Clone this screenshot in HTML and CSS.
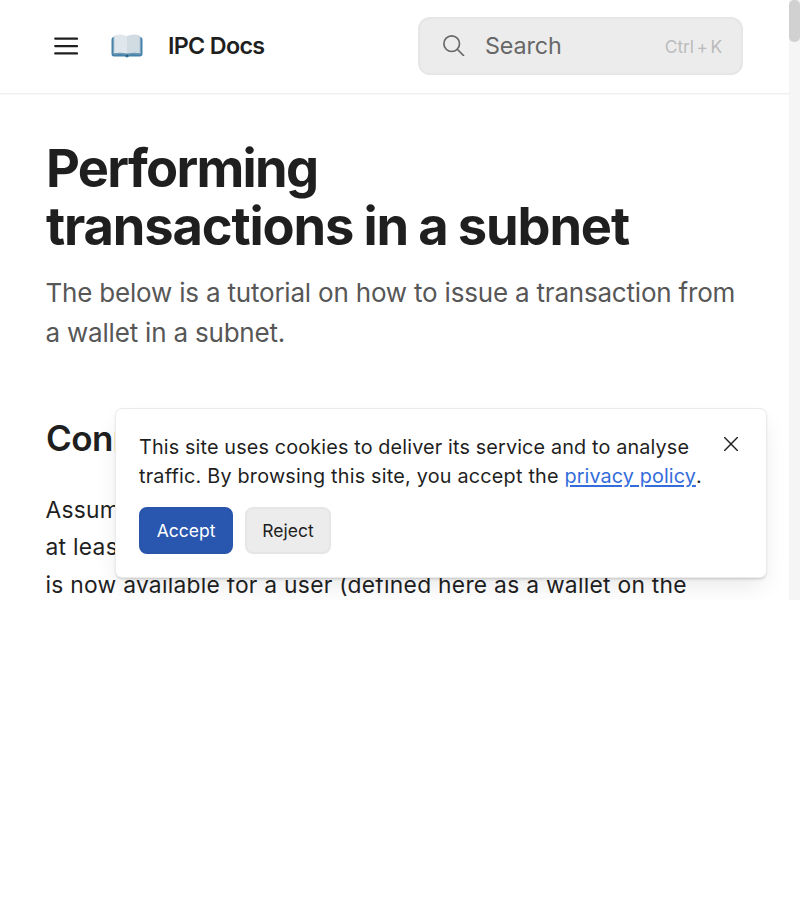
FILE: index.html
```
<!DOCTYPE html>
<html lang="en">
<head>
<meta charset="utf-8">
<title>IPC Docs</title>
<link rel="stylesheet" href="styles.css">
</head>
<body>
<div class="viewport">
  <div class="page">
    <header class="header">
      <svg class="menu" viewBox="0 0 24 20" aria-hidden="true"><path d="M1.2 2.6H23M1.2 10.100H23M1.2 17.400H23"/></svg>
      <svg class="book" viewBox="0 0 32 24" aria-hidden="true">
        <path d="M2.500 3H29.500Q31.500 3 31.500 5.500V19.500Q31.500 22.500 29 22.500H18Q16 24.500 14 22.500H3Q.5 22.500 .5 19.500V5.500Q.5 3 2.500 3Z" fill="#4682aa"/>
        <path d="M2.500 3 4 1.200V19L2.500 20ZM29.500 3 28 1.200V19L29.500 20Z" fill="#b2c6d4"/>
        <path d="M3.500 1.500Q10-.8 16 2V19.700Q9 18 3.500 19.200Z" fill="#e0e7ec"/>
        <path d="M28.500 1.500Q22-.8 16 2V19.700Q23 18 28.500 19.200Z" fill="#d0dbe2"/>
        <path d="M3 20Q10 19 16 20.300Q22 19 29 20" fill="none" stroke="#8dacbf" stroke-width=".8"/>
        <path d="M14.800 20.500H17.200V22.500H14.800Z" fill="#285f85"/>
      </svg>
      <span class="brand">IPC Docs</span>
      <div class="search">
        <svg class="lens" viewBox="0 0 22 22" aria-hidden="true"><circle cx="8.900" cy="8.900" r="8"/><path d="M14.600 14.600 21 21"/></svg>
        <span class="placeholder">Search</span>
        <span class="shortcut">Ctrl + K</span>
      </div>
    </header>
    <main class="content">
      <h1><span class="title-start">Performing</span><br>transactions in a subnet</h1>
      <p class="lead">The below is a tutorial on how to issue a transaction from<br>a wallet in a subnet.</p>
      <h2>Conn</h2>
      <p class="body">Assum<br>at leas<br>is now available for a user (defined here as a wallet on the</p>
    </main>
  </div>
  <div class="scrollbar"><div class="thumb"></div></div>
  <div class="cookies">
    <div class="notice">This site uses cookies to deliver its service and to analyse<br><span class="notice-end">traffic. By browsing this site, you accept the <a href="#">privacy policy</a>.</span></div>
    <div class="actions"><button class="accept">Accept</button><button class="reject">Reject</button></div>
    <svg class="close" viewBox="0 0 14 14" aria-label="Close"><path d="M.6.600 13.400 13.400M13.400.600.600 13.400"/></svg>
  </div>
</div>
</body>
</html>
```
FILE: styles.css
```
* { box-sizing: border-box; }
body { margin: 0; background: #fff; color: #1f1f1f; font-family: Inter, sans-serif; }
.viewport { position: relative; display: flex; width: 800px; height: 600px; overflow: hidden; }
.page { width: 789px; }
.header { display: flex; align-items: center; height: 94px; padding: 0 46px 2px 54px; border-bottom: 1px solid #efefef; box-shadow: 0 1px #f8f8f8; }
.menu { width: 24px; height: 20px; fill: none; stroke: #1f1f1f; stroke-width: 2.2; stroke-linecap: round; }
.book { width: 32px; height: 24px; margin-left: 33px; }
.brand { margin-left: 25px; font-size: 23.3px; font-weight: 600; letter-spacing: -0.68px; white-space: nowrap; }
.search { display: flex; align-items: center; width: 325px; height: 58px; margin-left: auto; padding: 0 20px 0 23px; border: 2px solid #e6e6e6; border-radius: 12px; background: #ececec; color: #676767; }
.lens { width: 21.500px; height: 21.500px; fill: none; stroke: #676767; stroke-width: 1.700; stroke-linecap: round; }
.placeholder { margin-left: 20.500px; font-size: 23.3px; letter-spacing: -.1px; }
.shortcut { margin-left: auto; padding-top: 2px; color: #bbb; font-size: 17.500px; word-spacing: -2.200px; letter-spacing: -.15px; margin-right: -1px; white-space: nowrap; }
.content { padding: 45px 0 0 46px; white-space: nowrap; }
h1 { margin: 0; font-size: 52.400px; line-height: 58px; font-weight: 700; letter-spacing: -1.140px; word-spacing: -1px; }
.title-start { letter-spacing: -1.700px; }
.lead { margin: 18px 0 0 -.5px; color: #575757; font-size: 26px; line-height: 40px; letter-spacing: -.200px; }
h2 { margin: 61px 0 0; font-size: 35px; line-height: 48px; font-weight: 600; letter-spacing: -.550px; }
.body { margin: 29px 0 0 -.5px; font-size: 22.800px; line-height: 37.400px; letter-spacing: .270px; }
.scrollbar { width: 11px; height: 600px; background: #f5f5f5; }
.thumb { width: 11px; height: 42px; border-radius: 5px; background: #d1d1d1; }
.cookies { position: absolute; left: 116px; top: 409px; width: 650px; height: 168px; padding: 24px 23px; border-radius: 6px; background: #fff; box-shadow: 0 0 0 1px #ebebeb, 0 2px 3px #00000030, 0 11px 24px -3px #00000018; }
.notice { font-size: 19.800px; line-height: 29px; letter-spacing: .150px; white-space: nowrap; }
.notice-end { letter-spacing: .220px; }
.notice a { color: #346ddb; letter-spacing: .1px; text-decoration-thickness: 2px; text-underline-offset: 2px; }
.actions { display: flex; gap: 12px; margin-top: 16px; }
button { height: 47px; padding: 0; border: 2px solid #e6e6e6; border-radius: 8px; background: #ececec; color: #1f1f1f; font: 17.500px Inter, sans-serif; }
.accept { width: 94px; border-color: #2955ab; background: #2956af; color: #fff; }
.reject { width: 86px; }
.close { position: absolute; right: 28.500px; top: 27.500px; width: 14px; height: 14px; fill: none; stroke: #1f1f1f; stroke-width: 1.400; stroke-linecap: round; }
```
